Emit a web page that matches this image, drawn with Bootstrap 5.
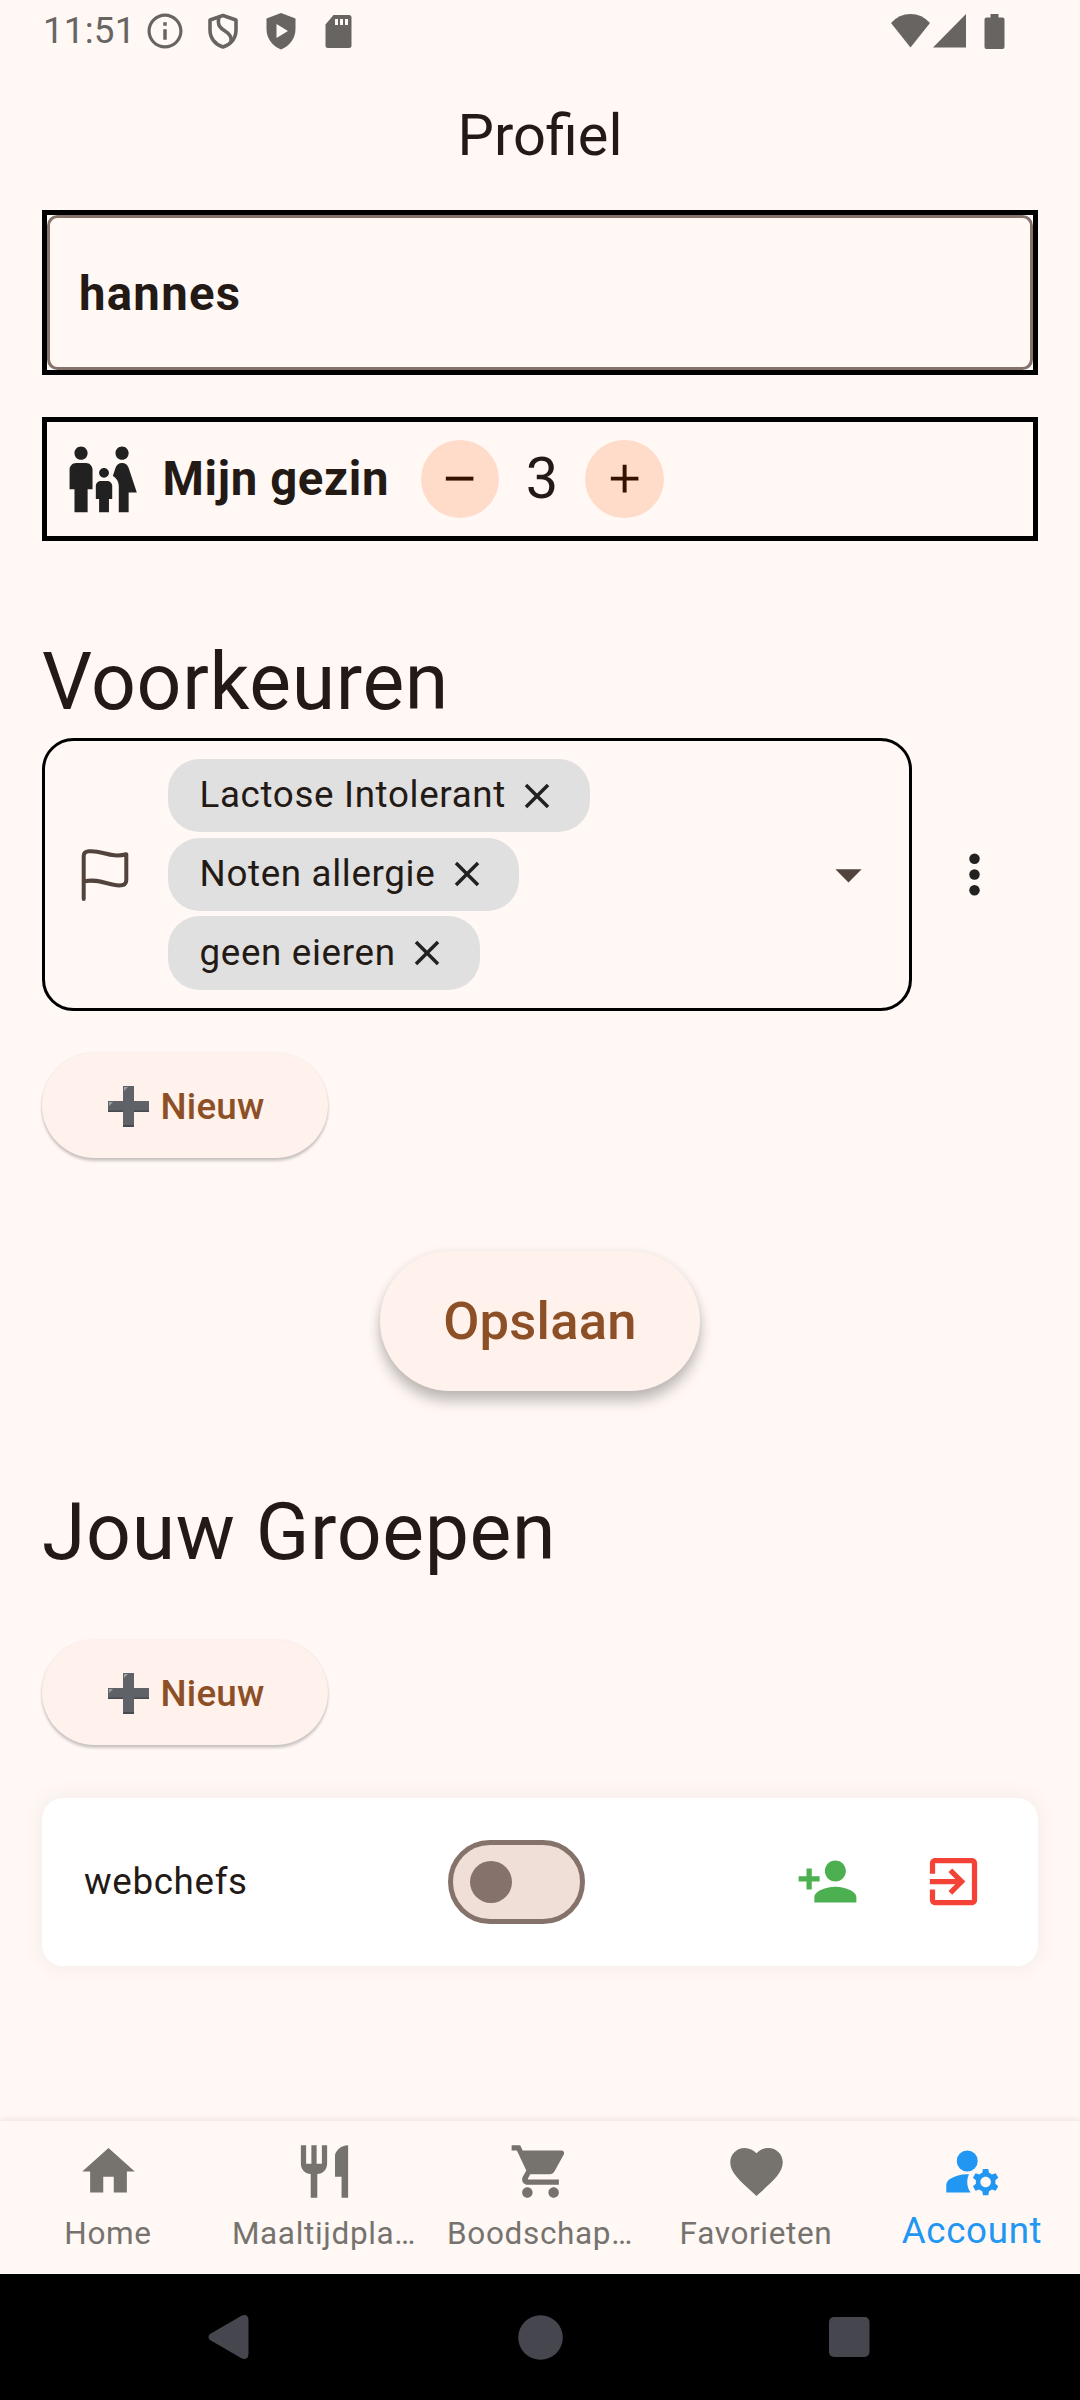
<!DOCTYPE html>
<html lang="nl">
<head>
<meta charset="utf-8">
<meta name="viewport" content="width=device-width, initial-scale=1">
<title>Profiel</title>
<link href="https://cdn.jsdelivr.net/npm/bootstrap@5.3.0/dist/css/bootstrap.min.css" rel="stylesheet">
<style>
  :root { --ink:#231a16; --surface:#fff8f5; --accent:#8c4f26; --outline:#85736b; --muted:#76736f; }
  body { width:1080px; height:2400px; margin:0; overflow:hidden; background:var(--surface); color:var(--ink);
         font-family:Roboto,"Noto Sans",sans-serif; font-size:36.75px; line-height:1.2; }
  svg { display:block; flex:none; }
  .statusbar { height:63px; color:#686462; padding:0 75px 1px 43px; }
  .statusbar .clock { font-size:36.75px; width:101px; line-height:62px; letter-spacing:.2px; }
  .statusbar .notif { gap:15px; }
  .statusbar .signal { margin-left:3px; }
  .statusbar .battery { margin-left:18px; }
  .topbar { height:147px; font-size:57.75px; padding-bottom:2px; }
  main { padding:0 42px; height:1911px; }
  .name-frame { height:165.4px; border:5.25px solid #000; background:#fff; }
  .name-input { height:100%; border:3px solid var(--outline); border-radius:10.5px; background:var(--surface);
                color:var(--ink); font-size:47.25px; font-weight:700; letter-spacing:1.31px; padding:3px 29px 0; }
  .family { height:123.4px; margin-top:42px; border:5.25px solid #000; padding-left:15.75px;
            font-size:47.25px; font-weight:700; }
  .family .family-label { margin-left:21px; width:258px; letter-spacing:.66px; white-space:nowrap; }
  .btn.round { width:78.75px; height:78.75px; padding:0; border:0; background:#ffdbca; color:#341100; }
  .family .count { width:85.6px; font-size:57.75px; font-weight:400; }
  .section-title { font-size:78.75px; font-weight:400; line-height:92px; letter-spacing:.66px; margin:95px 0 0; }
  .prefs-row { margin-top:10px; }
  .prefs { width:870px; height:273px; border:3px solid #000; border-radius:31.5px; padding:0 29px 0 29px; }
  .prefs .chips { margin-left:26px; gap:5.25px; }
  .chip { height:73.5px; border-radius:31.5px; background:#e0e0e0; padding:0 31.5px; gap:10.5px; letter-spacing:.66px; }
  .more { margin-left:31px; }
  .btn.pill { border:0; border-radius:999px; background:#fff1eb; color:var(--accent); font-weight:500; padding:0; }
  .btn.new { width:286px; height:105px; font-size:36.75px; letter-spacing:.26px; gap:10.5px; padding:2px 0 0 1.5px;
             box-shadow:0 3px 3px rgba(0,0,0,.2),0 0 3px rgba(0,0,0,.08); }
  .new-pref { margin-top:42px; }
  .new-group { margin-top:62px; }
  .btn.save { width:320px; height:140px; margin-top:93.5px; font-size:52.5px; letter-spacing:.26px;
              box-shadow:0 10px 14px rgba(0,0,0,.25),0 0 9px rgba(0,0,0,.06); }
  .group { height:168px; margin-top:52.5px; border-radius:21px; background:#fff; padding:0 53px 0 42px;
           letter-spacing:.66px; box-shadow:0 0 21px rgba(60,70,50,.08); }
  .group .group-name { width:364px; padding-top:1px; }
  .toggle { width:136.5px; height:84px; border:5.25px solid var(--outline); border-radius:42px; background:#f0dfd7; padding-left:16.5px; }
  .toggle span { width:42px; height:42px; border-radius:50%; background:var(--outline); }
  .leave { margin-left:63px; }
  .tabs { height:153px; color:var(--muted); box-shadow:0 -2px 5px rgba(120,60,40,.1); }
  .tabs .tab { width:216px; padding-top:19px; font-size:31.5px; letter-spacing:.66px; }
  .tabs .tab span { margin-top:12px; line-height:38px; max-width:190px; white-space:nowrap; }
  .tabs .tab.current { color:#2196f3; font-size:36.75px; }
  .tabs .tab.current span { margin-top:9px; }
  .sysnav { height:126px; background:#000; color:#46464f; padding:0 210px 0 207px; }
</style>
</head>
<body class="d-flex flex-column">
<header class="statusbar d-flex align-items-center">
  <div class="clock">11:51</div>
  <div class="notif d-flex align-items-center">
    <svg width="42" height="42" viewBox="0 0 24 24" fill="currentColor"><path d="M11 7h2v2h-2zm0 4h2v6h-2zm1-9C6.480 2 2 6.480 2 12s4.480 10 10 10 10-4.480 10-10S17.520 2 12 2zm0 18.200c-4.500 0-8.200-3.700-8.200-8.200S7.500 3.800 12 3.800s8.200 3.700 8.200 8.200-3.700 8.200-8.200 8.200z"/></svg>
    <svg width="44" height="42" viewBox="0 0 44 42" fill="none" stroke="currentColor" stroke-width="3.600" stroke-linejoin="round"><path d="M22 5.500 9 10v10c0 8 5 14.500 13 17 8-2.500 13-9 13-17V10z"/><path d="M18 7c-2 8 1 11 6 14 5 3 7 6 6 11"/></svg>
    <svg width="42" height="42" viewBox="0 0 42 42" fill="currentColor" fill-rule="evenodd"><path d="M21 3 6.500 8.500V19c0 9.500 6 17 14.500 20.500C29.500 36 35.500 28.500 35.500 19V8.500zM16.500 14v14l11.500-7z"/></svg>
    <svg width="42" height="42" viewBox="0 0 42 42" fill="currentColor" fill-rule="evenodd"><path d="M16.500 5H32q2.500 0 2.500 2.500v28q0 2.500-2.500 2.500H11q-2.500 0-2.500-2.500v-21zM18 9v6h3V9zm5 0v6h3V9zm5 0v6h3V9z"/></svg>
  </div>
  <div class="d-flex align-items-center ms-auto">
    <svg width="39" height="34" viewBox="0 0 39 34" fill="currentColor"><path d="M0 9Q8 0 19.500 0T39 9L19.500 33.500z"/></svg>
    <svg class="signal" width="33" height="34" viewBox="0 0 33 34" fill="currentColor"><path d="M33 0v33.500H0z"/></svg>
    <svg class="battery" width="21" height="35" viewBox="0 0 21 35" fill="currentColor"><path d="M6.500 0h8v3.500h4q2 0 2 2V33q0 2-2 2h-16q-2 0-2-2V5.500q0-2 2-2h4z"/></svg>
  </div>
</header>
<div class="topbar d-flex align-items-center justify-content-center">Profiel</div>

<main>
  <div class="name-frame"><div class="name-input d-flex align-items-center">hannes</div></div>

  <div class="family d-flex align-items-center">
    <svg width="78.750" height="78.750" viewBox="0 0 24 24" fill="#212121"><path d="M16 4c0-1.110.890-2 2-2s2 .890 2 2-.890 2-2 2-2-.890-2-2zm4 18v-6h2.500l-2.540-7.630C19.680 7.550 18.920 7 18.060 7h-.120c-.860 0-1.630.550-1.900 1.370l-.860 2.580c1.080.600 1.820 1.730 1.820 3.050v8h3zm-7.500-10.500c.830 0 1.500-.670 1.500-1.500s-.670-1.500-1.500-1.500S11 9.170 11 10s.670 1.500 1.500 1.500zM5.500 6c1.110 0 2-.890 2-2s-.890-2-2-2-2 .890-2 2 .890 2 2 2zm2 16v-7H9V9c0-1.100-.900-2-2-2H4c-1.100 0-2 .900-2 2v6h1.500v7h4zm6.500 0v-4h1v-4c0-.820-.680-1.500-1.500-1.500h-2c-.820 0-1.500.680-1.500 1.500v4h1v4h3z"/></svg>
    <span class="family-label">Mijn gezin</span>
    <button class="btn round rounded-circle d-flex align-items-center justify-content-center" aria-label="Minder"><svg width="47.250" height="47.250" viewBox="0 0 24 24" fill="currentColor"><path d="M19 13H5v-2h14z"/></svg></button>
    <span class="count text-center">3</span>
    <button class="btn round rounded-circle d-flex align-items-center justify-content-center" aria-label="Meer"><svg width="47.250" height="47.250" viewBox="0 0 24 24" fill="currentColor"><path d="M19 13h-6v6h-2v-6H5v-2h6V5h2v6h6z"/></svg></button>
  </div>

  <h1 class="section-title">Voorkeuren</h1>
  <div class="prefs-row d-flex align-items-center">
    <div class="prefs d-flex align-items-center">
      <svg width="68" height="63" viewBox="0 0 68 63" fill="none" stroke="#52443c" stroke-width="4" stroke-linecap="round" stroke-linejoin="round"><path d="M9.700 56V13c0-3 1.500-4.300 5-4.700 13-1.500 22 7.200 37.600 2.900v26c0 3.500-2.500 5.200-7 5.200-12 0-20-7.500-35.600-4"/></svg>
      <div class="chips d-flex flex-column align-items-start">
        <div class="chip d-flex align-items-center"><span>Lactose Intolerant</span><svg width="42" height="42" viewBox="0 0 24 24" fill="#212121"><path d="M19 6.410 17.590 5 12 10.590 6.410 5 5 6.410 10.590 12 5 17.590 6.410 19 12 13.410 17.590 19 19 17.590 13.410 12z"/></svg></div>
        <div class="chip d-flex align-items-center"><span>Noten allergie</span><svg width="42" height="42" viewBox="0 0 24 24" fill="#212121"><path d="M19 6.410 17.590 5 12 10.590 6.410 5 5 6.410 10.590 12 5 17.590 6.410 19 12 13.410 17.590 19 19 17.590 13.410 12z"/></svg></div>
        <div class="chip d-flex align-items-center"><span>geen eieren</span><svg width="42" height="42" viewBox="0 0 24 24" fill="#212121"><path d="M19 6.410 17.590 5 12 10.590 6.410 5 5 6.410 10.590 12 5 17.590 6.410 19 12 13.410 17.590 19 19 17.590 13.410 12z"/></svg></div>
      </div>
      <svg class="ms-auto" width="63" height="63" viewBox="0 0 24 24" fill="#52443c"><path d="m7 10 5 5 5-5z"/></svg>
    </div>
    <svg class="more" width="63" height="63" viewBox="0 0 24 24" fill="#212121"><circle cx="12" cy="6" r="2"/><circle cx="12" cy="12" r="2"/><circle cx="12" cy="18" r="2"/></svg>
  </div>

  <button class="btn pill new new-pref d-flex align-items-center justify-content-center">
    <svg width="43" height="43" viewBox="0 0 43 43"><path fill="#5f6368" d="M16 1h11v15h15v11H27v15H16V27H1V16h15z"/><path fill="#474b50" d="M16 40h11v2H16zM1 25.500h15V27H1zm26 0h15V27H27z"/><path fill="#a0a3a6" d="M17 2h4l-4 4zM2 17h4l-4 4z"/></svg>
    <span>Nieuw</span>
  </button>

  <button class="btn pill save d-block mx-auto">Opslaan</button>

  <h2 class="section-title">Jouw Groepen</h2>
  <button class="btn pill new new-group d-flex align-items-center justify-content-center">
    <svg width="43" height="43" viewBox="0 0 43 43"><path fill="#5f6368" d="M16 1h11v15h15v11H27v15H16V27H1V16h15z"/><path fill="#474b50" d="M16 40h11v2H16zM1 25.500h15V27H1zm26 0h15V27H27z"/><path fill="#a0a3a6" d="M17 2h4l-4 4zM2 17h4l-4 4z"/></svg>
    <span>Nieuw</span>
  </button>

  <div class="group d-flex align-items-center">
    <span class="group-name">webchefs</span>
    <div class="toggle d-flex align-items-center"><span></span></div>
    <svg class="ms-auto" width="63" height="63" viewBox="0 0 24 24" fill="#4caf50"><path d="M15 12c2.210 0 4-1.790 4-4s-1.790-4-4-4-4 1.790-4 4 1.790 4 4 4zm-9-2V7H4v3H1v2h3v3h2v-3h3v-2H6zm9 4c-2.670 0-8 1.340-8 4v2h16v-2c0-2.660-5.330-4-8-4z"/></svg>
    <svg class="leave" width="63" height="63" viewBox="0 0 24 24" fill="#f44336"><path d="M10.090 15.590 11.500 17l5-5-5-5-1.410 1.410L12.670 11H3v2h9.670l-2.580 2.590zM19 3H5c-1.110 0-2 .900-2 2v4h2V5h14v14H5v-4H3v4c0 1.100.890 2 2 2h14c1.100 0 2-.900 2-2V5c0-1.100-.900-2-2-2z"/></svg>
  </div>
</main>

<nav class="tabs d-flex">
  <div class="tab d-flex flex-column align-items-center"><svg width="63" height="63" viewBox="0 0 24 24" fill="currentColor"><path d="M10 20v-6h4v6h5v-8h3L12 3 2 12h3v8z"/></svg><span>Home</span></div>
  <div class="tab d-flex flex-column align-items-center"><svg width="63" height="63" viewBox="0 0 24 24" fill="currentColor"><path d="M11 9H9V2H7v7H5V2H3v7c0 2.120 1.660 3.840 3.750 3.970V22h2.500v-9.030C11.340 12.840 13 11.120 13 9V2h-2v7zm5-3v8h2.500v8H21V2c-2.760 0-5 2.240-5 4z"/></svg><span>Maaltijdpla…</span></div>
  <div class="tab d-flex flex-column align-items-center"><svg width="63" height="63" viewBox="0 0 24 24" fill="currentColor"><path d="M7 18c-1.100 0-1.990.900-1.990 2S5.900 22 7 22s2-.900 2-2-.900-2-2-2zM1 2v2h2l3.600 7.590-1.350 2.450c-.160.280-.250.610-.250.960 0 1.100.900 2 2 2h12v-2H7.420c-.140 0-.250-.110-.250-.250l.030-.120.900-1.630h7.450c.750 0 1.410-.410 1.750-1.030l3.580-6.490c.080-.140.120-.310.120-.480 0-.550-.450-1-1-1H5.210l-.940-2H1zm16 16c-1.100 0-1.990.900-1.990 2s.890 2 1.990 2 2-.900 2-2-.900-2-2-2z"/></svg><span>Boodschap…</span></div>
  <div class="tab d-flex flex-column align-items-center"><svg width="63" height="63" viewBox="0 0 24 24" fill="currentColor"><path d="m12 21.350-1.450-1.320C5.400 15.360 2 12.280 2 8.500 2 5.420 4.420 3 7.500 3c1.740 0 3.410.810 4.500 2.090C13.090 3.810 14.760 3 16.500 3 19.580 3 22 5.420 22 8.500c0 3.780-3.400 6.860-8.550 11.540L12 21.350z"/></svg><span>Favorieten</span></div>
  <div class="tab current d-flex flex-column align-items-center"><svg width="63" height="63" viewBox="0 0 24 24" fill="currentColor"><circle cx="10" cy="8" r="4"/><path d="M10.670 13.020C10.450 13.010 10.230 13 10 13c-2.420 0-4.680.670-6.610 1.820C2.510 15.340 2 16.320 2 17.350V20h9.260A6.963 6.963 0 0 1 10 16c0-1.070.250-2.070.670-2.980zM20.750 16c0-.220-.030-.420-.060-.630l1.140-1.010-1-1.730-1.450.490c-.320-.270-.680-.480-1.080-.630L18 11h-2l-.300 1.490c-.400.150-.760.360-1.080.630l-1.450-.490-1 1.730 1.140 1.010c-.030.210-.060.410-.060.630s.030.420.060.630l-1.140 1.010 1 1.730 1.450-.490c.320.270.680.480 1.080.630L16 21h2l.300-1.490c.400-.150.760-.360 1.080-.630l1.450.490 1-1.730-1.140-1.010c.030-.210.060-.410.060-.630zM17 18c-1.100 0-2-.900-2-2s.900-2 2-2 2 .900 2 2-.900 2-2 2z"/></svg><span>Account</span></div>
</nav>
<footer class="sysnav d-flex align-items-center justify-content-between">
  <svg width="44" height="46" viewBox="0 0 44 46" fill="currentColor"><path d="M3 20Q0 23 3 26L34 44Q41 47 41.500 40V6Q41 -1 34 2z"/></svg>
  <svg width="45" height="45" viewBox="0 0 45 45" fill="currentColor"><circle cx="22.500" cy="22.500" r="22.300"/></svg>
  <svg width="41" height="40" viewBox="0 0 41 40" fill="currentColor"><rect width="40.500" height="40" rx="5"/></svg>
</footer>
<script src="https://cdn.jsdelivr.net/npm/bootstrap@5.3.0/dist/js/bootstrap.bundle.min.js"></script>
</body>
</html>
